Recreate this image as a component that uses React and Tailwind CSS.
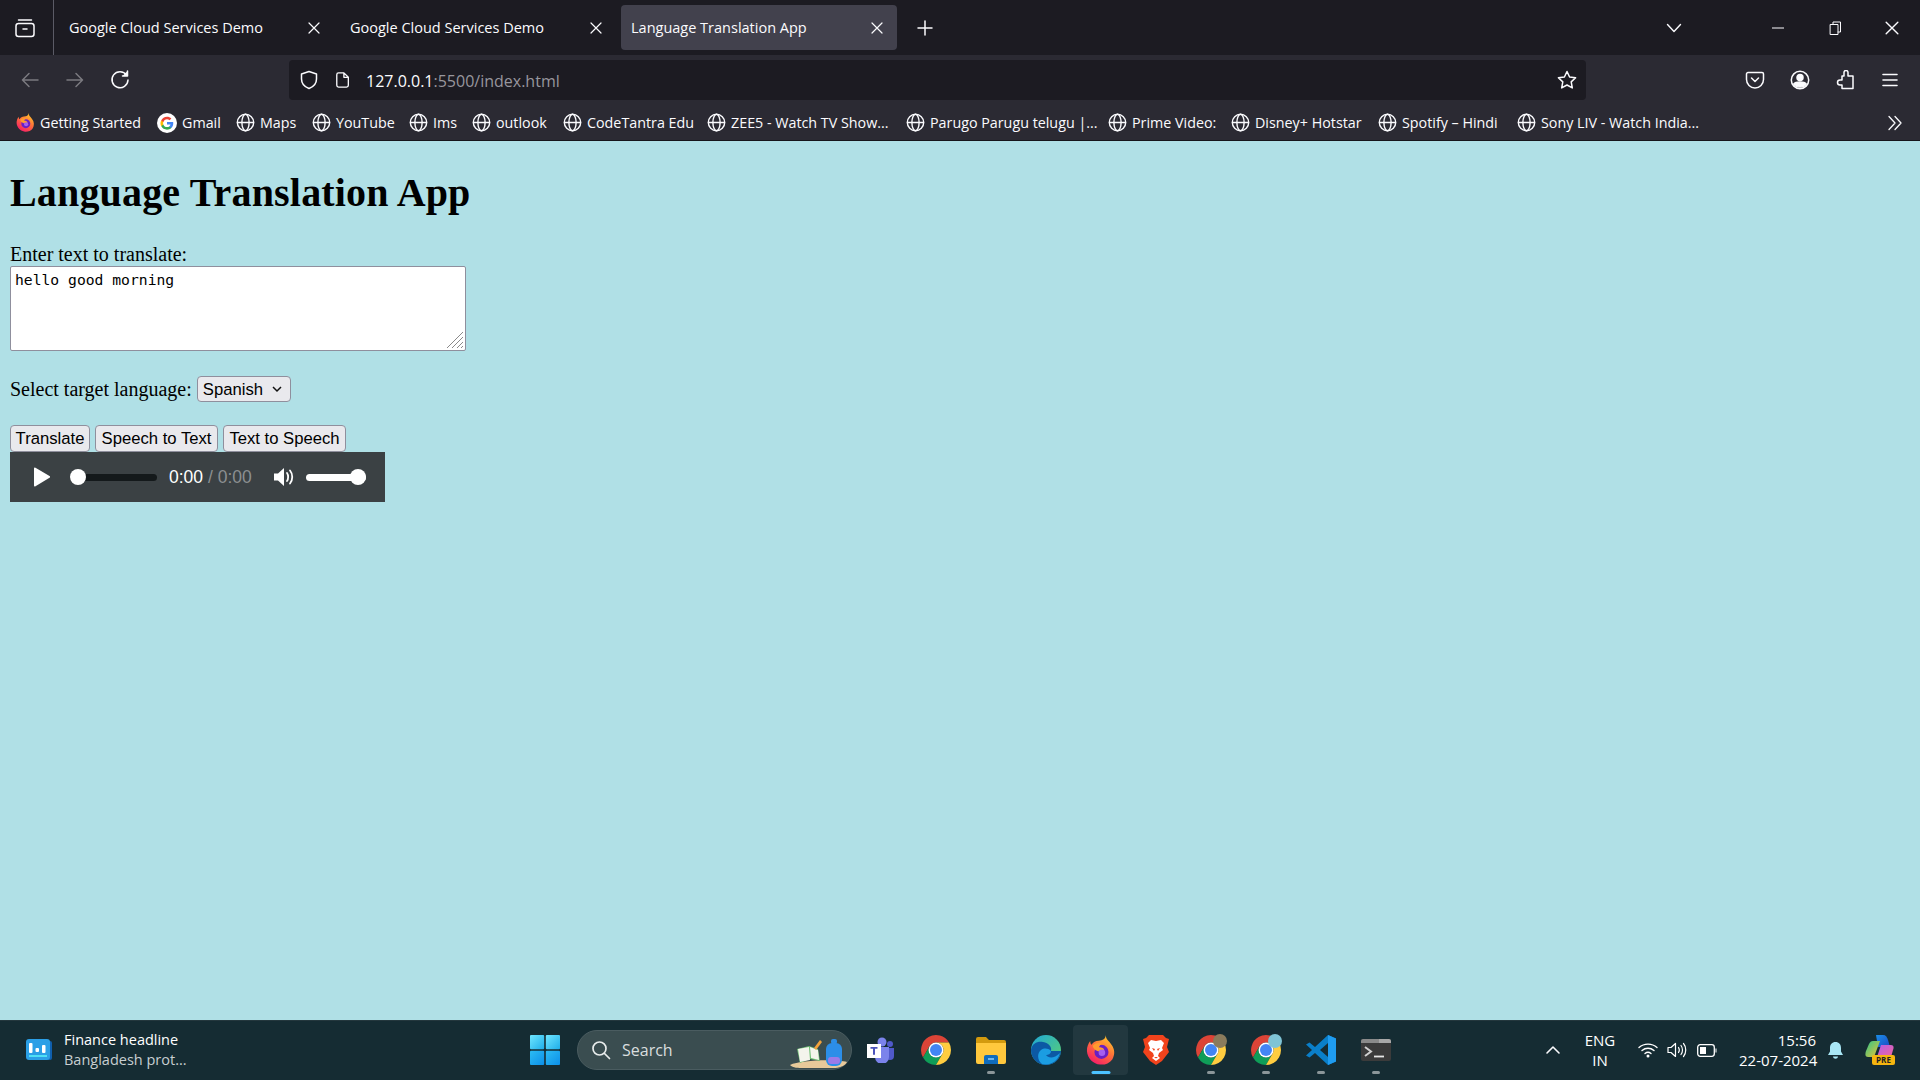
import React from "react";

const uiFont = "font-['Open_Sans','Noto_Sans',sans-serif]";

// Small stroke icon wrapper, everything in the browser chrome uses the same look
const Stroke = ({ size = 20, color = "#fbfbfe", width = 1.5, children, view = "0 0 20 20" }) => (
  <svg width={size} height={size} viewBox={view} fill="none" stroke={color} strokeWidth={width} strokeLinecap="round" strokeLinejoin="round" className="shrink-0">
    {children}
  </svg>
);

const CloseX = ({ size = 12, color = "#fbfbfe" }) => (
  <Stroke size={size} view="0 0 12 12" color={color} width={1.2}>
    <path d="M1 1l10 10M11 1L1 11" />
  </Stroke>
);

const Globe = () => (
  <Stroke size={19} view="0 0 19 19" color="#fbfbfe" width={1.4}>
    <circle cx="9.5" cy="9.5" r="8.2" />
    <ellipse cx="9.5" cy="9.5" rx="3.6" ry="8.2" />
    <path d="M1.5 9.5h16" />
  </Stroke>
);

const Firefox = ({ size = 19, id = "ffBody" }) => (
  <svg width={size} height={size} viewBox="0 0 32 32" className="shrink-0">
    <defs>
      <linearGradient id={id} x1="0.8" y1="0" x2="0.2" y2="1">
        <stop offset="0" stopColor="#ffd02a" />
        <stop offset="0.45" stopColor="#ff7139" />
        <stop offset="1" stopColor="#f5156c" />
      </linearGradient>
    </defs>
    <path d="M21 0c0 4 3 6 6 10 4 5 4 11 1 16-3 4-8 6-13 5.500C8 31 1.500 25 1 17 .8 13 2.500 9 4.500 6.500c0 2 .6 3.500 1.500 4 1.500-3 4.500-4.500 7.500-4.500C18 6 21 4 21 0z" fill={`url(#${id})`} />
    <circle cx="16.500" cy="18" r="7.500" fill="#6a1fc4" />
    <path d="M7 11.500c3-3.500 9-4.500 13-1.500-4-1-6 1-6 3 3 0 5.500 1 5.500 3.500-3 2.500-10.500 1.500-12.500-5z" fill="#ff9a2e" />
    <circle cx="17" cy="19" r="3.500" fill="#a45ff0" />
  </svg>
);

const GoogleG = () => (
  <svg width={20} height={20} viewBox="0 0 48 48" className="shrink-0">
    <circle cx="24" cy="24" r="24" fill="#fff" />
    <path d="M39 24.500c0-1.100-.1-2.200-.3-3.200H24v6h8.500c-.4 2-1.500 3.600-3.100 4.700v3.900h5C37.300 33.200 39 29.200 39 24.500z" fill="#4285f4" />
    <path d="M24 40c4.200 0 7.700-1.400 10.400-3.800l-5-3.900c-1.400.9-3.200 1.500-5.400 1.500-4.100 0-7.600-2.800-8.800-6.500H10v4C12.600 36.500 17.900 40 24 40z" fill="#34a853" />
    <path d="M15.200 27.800c-.3-1-.5-2-.5-3s.2-2.100.5-3v-4H10c-1.100 2.100-1.700 4.500-1.700 7s.6 4.900 1.700 7l5.200-4z" fill="#fbbc05" />
    <path d="M24 15.200c2.300 0 4.400.8 6 2.400l4.500-4.500C31.700 10.500 28.200 9 24 9c-6.100 0-11.400 3.500-14 8.800l5.200 4c1.200-3.800 4.700-6.600 8.800-6.600z" fill="#ea4335" />
  </svg>
);

const Chrome = ({ children }) => (
  <span className="relative flex h-[30px] w-[30px] items-center justify-center">
    <svg width={30} height={30} viewBox="4 4 40 40">
      <path d="M24 14H41.320A20 20 0 0 0 6.680 34L15.340 19A10 10 0 0 1 24 14Z" fill="#db4437" />
      <path d="M15.340 19L6.680 34A20 20 0 0 0 24 44L32.660 29A10 10 0 0 1 15.340 19Z" fill="#0f9d58" />
      <path d="M24 44A20 20 0 0 0 41.320 14H24A10 10 0 0 1 32.660 29Z" fill="#ffcd40" />
      <circle cx="24" cy="24" r="10" fill="#fff" />
      <circle cx="24" cy="24" r="8" fill="#4285f4" />
    </svg>
    {children}
  </span>
);

const Teams = () => (
  <svg width={28} height={26} viewBox="0 0 28 26">
    <circle cx="15" cy="5" r="4.500" fill="#7b83eb" />
    <circle cx="23" cy="7" r="3" fill="#5059c9" />
    <path d="M19 11h8v8a4 4 0 0 1-8 0z" fill="#5059c9" />
    <path d="M8 10h14v10a7 7 0 0 1-14 0z" fill="#7b83eb" />
    <rect x="0" y="7" width="14" height="14" fill="#fff" />
    <path d="M3.500 10h7v1.800H8v6H6v-6H3.500z" fill="#4b53bc" />
  </svg>
);

const Folder = () => (
  <svg width={30} height={28} viewBox="0 0 30 28">
    <path d="M0 3a2 2 0 0 1 2-2h8l3 3h15a2 2 0 0 1 2 2v3H0z" fill="#d39a0e" />
    <path d="M0 7h30v19a2 2 0 0 1-2 2H2a2 2 0 0 1-2-2z" fill="#ffc83d" />
    <path d="M8 21a2 2 0 0 1 2-2h10a2 2 0 0 1 2 2v7H8z" fill="#0f6cbd" />
    <path d="M12 23h6" stroke="#8fd0ff" strokeWidth="1.500" />
  </svg>
);

const Edge = () => (
  <svg width={30} height={30} viewBox="0 0 30 30">
    <defs>
      <linearGradient id="edgeTop" x1="0" y1="0" x2="1" y2="1">
        <stop offset="0" stopColor="#1ea7d8" />
        <stop offset="1" stopColor="#5fd36a" />
      </linearGradient>
    </defs>
    <circle cx="15" cy="15" r="15" fill="url(#edgeTop)" />
    <path d="M0 15C1 8 7 6 12 7c6 1 9 5 8 9h10c0 8-7 14-15 14C6 30 0 23 0 15z" fill="#0c59a4" />
    <path d="M11 29C6 25 6 18 10 15c3-2 7-2 10 1 0 3-3 4-5 4 2 3 8 4 14-2-2 8-9 13-18 11z" fill="#1b9de2" />
  </svg>
);

const Brave = () => (
  <svg width={26} height={30} viewBox="0 0 26 30">
    <path d="M6 0h14l3 3 3 1-2 8 2 5-7 9-6 4-6-4-7-9 2-5L0 4l3-1z" fill="#f1431c" />
    <path d="M13 6l5-1 3 3-2 5 1 2-4 3-1 3 2 2-4 3-4-3 2-2-1-3-4-3 1-2-2-5 3-3z" fill="#fff" />
    <path d="M9 13l3 1-1 2zM17 13l-3 1 1 2zM11 22h4l-2 1.500z" fill="#f1431c" />
  </svg>
);

const VsCode = () => (
  <svg width={30} height={30} viewBox="0 0 30 30">
    <path d="M22 0l8 3.500v23L22 30 9 18l-5.500 4.500L0 20.500l6-5.500-6-5.500L3.500 7.500 9 12z" fill="#0a7fc9" />
    <path d="M22 0l8 3.500v23L22 30z" fill="#1f9cf0" />
    <path d="M22 8l-8 7 8 7z" fill="#152c33" />
  </svg>
);

const Terminal = () => (
  <svg width={30} height={23} viewBox="0 0 30 23">
    <rect width="30" height="22" y="0" rx="2" fill="#3b3b3b" />
    <path d="M0 2a2 2 0 0 1 2-2h16v4H0z" fill="#8a8a8a" />
    <path d="M18 0h10a2 2 0 0 1 2 2v2H18z" fill="#a8a8a8" />
    <path d="M4 8l6 4.500L4 17" fill="none" stroke="#d0d0d0" strokeWidth="2" />
    <path d="M13 17.500h10" stroke="#e6e6e6" strokeWidth="1.800" />
  </svg>
);

const Copilot = () => (
  <svg width={30} height={30} viewBox="0 0 30 30">
    <defs>
      <linearGradient id="copA" x1="0" y1="0" x2="1" y2="1">
        <stop offset="0" stopColor="#1a8ee8" />
        <stop offset="1" stopColor="#1c49c4" />
      </linearGradient>
      <linearGradient id="copB" x1="0" y1="0" x2="1" y2="1">
        <stop offset="0" stopColor="#2bc58a" />
        <stop offset="1" stopColor="#f1c232" />
      </linearGradient>
      <linearGradient id="copC" x1="0" y1="0" x2="1" y2="1">
        <stop offset="0" stopColor="#b45fe6" />
        <stop offset="1" stopColor="#f0649e" />
      </linearGradient>
    </defs>
    <path d="M11 0h7c3 0 4 2 5 5l2 7H13z" fill="url(#copA)" />
    <path d="M8 6h7L9 22H3C0 22 0 19 1 16l3-7c1-2 2-3 4-3z" fill="url(#copB)" />
    <path d="M16 10h10c3 0 3 3 2 5l-2 7H12z" fill="url(#copC)" />
    <rect x="7" y="20" width="23" height="10" rx="2" fill="#f5b50f" />
    <text x="18.500" y="28" textAnchor="middle" fontSize="8" fontWeight="700" fill="#222" fontFamily="'Open Sans',sans-serif">PRE</text>
  </svg>
);

const Widget = () => (
  <svg width={26} height={22} viewBox="0 0 26 22">
    <rect x="21" y="2" width="5" height="19" rx="2" fill="#0f5fae" />
    <rect width="24" height="21" rx="3" fill="#2b9fe6" />
    <rect x="3" y="4" width="3.500" height="10" rx="1" fill="#fff" />
    <rect x="9.500" y="9" width="3.500" height="4" rx="1" fill="#fff" />
    <rect x="16" y="6" width="3.500" height="8" rx="1" fill="#fff" />
    <rect x="3" y="16" width="18" height="2" fill="#4fe0f5" />
  </svg>
);

const WinLogo = () => (
  <svg width={30} height={30} viewBox="0 0 30 30" className="shrink-0">
    <defs>
      <linearGradient id="winA" x1="0" y1="0" x2="1" y2="1">
        <stop offset="0" stopColor="#6fe6ff" />
        <stop offset="1" stopColor="#1faee9" />
      </linearGradient>
      <linearGradient id="winB" x1="0" y1="0" x2="1" y2="1">
        <stop offset="0" stopColor="#2cbcf3" />
        <stop offset="1" stopColor="#0c8fe8" />
      </linearGradient>
    </defs>
    <rect width="14.200" height="14.200" rx="1" fill="url(#winA)" />
    <rect x="15.800" width="14.200" height="14.200" rx="1" fill="url(#winA)" />
    <rect y="15.800" width="14.200" height="14.200" rx="1" fill="url(#winB)" />
    <rect x="15.800" y="15.800" width="14.200" height="14.200" rx="1" fill="url(#winB)" />
  </svg>
);

const SearchArt = () => (
  <svg width={58} height={34} viewBox="0 0 58 32" className="shrink-0">
    <path d="M0 28c10-5 46-6 57-3-2 4-8 6-14 6H14C8 31 3 31 0 28z" fill="#e7c99a" />
    <path d="M7 12l12-3 9 3 2 12-10-2-10 4z" fill="#6fbf73" />
    <path d="M8 12l11-2 1 13-10 2zM20 10l8 3 1 10-8-2z" fill="#f4f4ec" />
    <path d="M24 11l6-8 2 2-6 8z" fill="#f3a23a" />
    <rect x="36" y="6" width="16" height="23" rx="6" fill="#2c8ee8" />
    <rect x="41" y="2" width="6" height="5" rx="2" fill="#2c8ee8" />
    <rect x="38" y="20" width="12" height="7" rx="3" fill="#9a7be8" />
  </svg>
);

const tabs = [
  { title: "Google Cloud Services Demo", wrap: "w-[281px] pl-[15px] pr-[15px]" },
  { title: "Google Cloud Services Demo", wrap: "w-[286px] pl-[15px] pr-[19px]" },
];

const bookmarks = [
  { label: "Getting Started", icon: <Firefox id="ffSmall" />, cls: "w-[141px]" },
  { label: "Gmail", icon: <GoogleG />, cls: "w-[79px]" },
  { label: "Maps", icon: <Globe />, cls: "w-[76px]" },
  { label: "YouTube", icon: <Globe />, cls: "w-[97px]" },
  { label: "Ims", icon: <Globe />, cls: "w-[63px]" },
  { label: "outlook", icon: <Globe />, cls: "w-[91px]" },
  { label: "CodeTantra Edu", icon: <Globe />, cls: "w-[144px]" },
  { label: "ZEE5 - Watch TV Show...", icon: <Globe />, cls: "w-[199px]" },
  { label: "Parugo Parugu telugu |...", icon: <Globe />, cls: "w-[202px]" },
  { label: "Prime Video:", icon: <Globe />, cls: "w-[123px]" },
  { label: "Disney+ Hotstar", icon: <Globe />, cls: "w-[147px]" },
  { label: "Spotify – Hindi", icon: <Globe />, cls: "w-[139px]" },
  { label: "Sony LIV - Watch India...", icon: <Globe />, cls: "w-[200px]" },
];

const TabBar = () => (
  <div className="flex h-[55px] items-center bg-[#1c1b22] text-[#fbfbfe]">
    <div className="flex h-full w-[54px] items-center border-r border-[#5b5b66] pl-[15px]">
      <Stroke size={20}>
        <rect x="1" y="5.500" width="18" height="13" rx="2.500" />
        <path d="M3.500 2h13M8 11h4" />
      </Stroke>
    </div>
    {tabs.map((tab, i) => (
      <div key={i} className={`flex h-[45px] items-center justify-between ${tab.wrap}`}>
        <span className="text-[14.500px] whitespace-nowrap">{tab.title}</span>
        <CloseX />
      </div>
    ))}
    <div className="flex h-[45px] w-[276px] items-center justify-between rounded-[4px] bg-[#42414d] pr-[14px] pl-[10px]">
      <span className="text-[14.500px] whitespace-nowrap">Language Translation App</span>
      <CloseX />
    </div>
    <div className="ml-[20px]">
      <Stroke size={16} view="0 0 16 16" width={1.5}>
        <path d="M8 1v14M1 8h14" />
      </Stroke>
    </div>
    <div className="ml-auto flex items-center">
      <Stroke size={16} view="0 0 16 16" width={1.4}>
        <path d="M1.500 4.500L8 11.500l6.500-7" />
      </Stroke>
      <div className="ml-[88px] flex w-[16px] justify-center">
        <Stroke size={12} view="0 0 12 12" width={1}>
          <path d="M0 6h12" />
        </Stroke>
      </div>
      <div className="ml-[42px]">
        <Stroke size={14} view="0 0 14 14" width={1}>
          <rect x="2.500" y="3.500" width="7.500" height="10" />
          <path d="M5 3.500V1h7.500v10H10" />
        </Stroke>
      </div>
      <div className="mr-[21px] ml-[43px]">
        <CloseX size={14} />
      </div>
    </div>
  </div>
);

const NavBar = () => (
  <div className="flex h-[50px] items-center bg-[#2b2a33] text-[#fbfbfe]">
    <div className="flex w-[289px] items-center gap-[25px] pl-[20px]">
      <Stroke size={20} color="#7b7a80">
        <path d="M18 10H2.500M9 3.500L2.500 10 9 16.500" />
      </Stroke>
      <Stroke size={20} color="#7b7a80">
        <path d="M2 10h15.500M11 3.500l6.500 6.500-6.500 6.500" />
      </Stroke>
      <Stroke size={20}>
        <path d="M16.500 5A8 8 0 1 0 18 10" />
        <path d="M17.500 1v5h-5" fill="#fbfbfe" />
      </Stroke>
    </div>
    <div className="flex h-[40px] w-[1297px] items-center rounded-[4px] bg-[#1c1b22] pr-[9px] pl-[10px]">
      <Stroke size={20}>
        <path d="M10 1.500l7.500 2.500v5c0 5-3.500 8-7.500 9.500C6 17 2.500 14 2.500 9V4z" />
      </Stroke>
      <div className="ml-[16px]">
        <Stroke size={16} view="0 0 16 18" width={1.5}>
          <path d="M3 1h6l5 5v9a2 2 0 0 1-2 2H3a2 2 0 0 1-2-2V3a2 2 0 0 1 2-2zM9 1v5h5" />
        </Stroke>
      </div>
      <span className="ml-[15px] pt-[2px] text-[16px] text-[#fbfbfe]">
        127.0.0.1<span className="text-[#97969d]">:5500/index.html</span>
      </span>
      <div className="ml-auto">
        <Stroke size={20}>
          <path d="M10 1.500l2.600 5.500 6 .8-4.400 4.100 1.100 6L10 15l-5.300 2.900 1.100-6L1.400 7.800l6-.8z" />
        </Stroke>
      </div>
    </div>
    <div className="ml-[159px] flex items-center gap-[25px]">
      <Stroke size={20}>
        <path d="M3 2.500h14a1.500 1.500 0 0 1 1.500 1.500v5.500a8.500 8.500 0 0 1-17 0V4A1.500 1.500 0 0 1 3 2.500z" />
        <path d="M6.500 8l3.500 3.500L13.500 8" />
      </Stroke>
      <Stroke size={20}>
        <circle cx="10" cy="10" r="8.700" />
        <circle cx="10" cy="7.500" r="3" fill="#fbfbfe" />
        <path d="M3.800 14c2-2.800 10.400-2.800 12.400 0-2 4-10.400 4-12.400 0z" fill="#fbfbfe" />
      </Stroke>
      <Stroke size={20}>
        <path d="M9 2.500a2 2 0 0 1 4 0V6h5v12.500H7V15H5a2.500 2.500 0 0 1 0-5h2V6h2z" />
      </Stroke>
      <Stroke size={20} width={1.6}>
        <path d="M3 4.500h14M3 10h14M3 15.500h14" />
      </Stroke>
    </div>
  </div>
);

const BookmarkBar = () => (
  <div className="flex h-[36px] items-center border-b border-[#16151b] bg-[#2b2a33] pl-[16px] text-[#fbfbfe]">
    {bookmarks.map((b) => (
      <div key={b.label} className={`flex items-center gap-[5px] text-[14.300px] whitespace-nowrap ${b.cls}`}>
        {b.icon}
        <span>{b.label}</span>
      </div>
    ))}
    <div className="mr-[17px] ml-auto">
      <Stroke size={16} view="0 0 16 16" width={1.3}>
        <path d="M2 1.500L8 8l-6 6.500M8 1.500L14 8l-6 6.500" />
      </Stroke>
    </div>
  </div>
);

const AudioPlayer = () => (
  <div className={`flex h-[50px] w-[375px] items-center bg-[#3b4144] text-[#fff] ${uiFont}`}>
    <svg width={18} height={20} viewBox="0 0 18 20" className="ml-[23px] shrink-0">
      <path d="M1 1.500a1 1 0 0 1 1.500-.8l14 8.300a1 1 0 0 1 0 1.800l-14 8.500A1 1 0 0 1 1 18.500z" fill="#fff" />
    </svg>
    <div className="relative ml-[19px] h-[7px] w-[87px] rounded-full bg-[#14191b]">
      <span className="absolute top-1/2 left-0 h-[16px] w-[16px] -translate-y-1/2 rounded-full bg-white" />
    </div>
    <span className="ml-[12px] font-['Liberation_Sans',sans-serif] text-[17.500px] whitespace-nowrap">
      0:00 <span className="text-[#8b8f91]">/ 0:00</span>
    </span>
    <svg width={22} height={20} viewBox="0 0 22 20" className="ml-[21px] shrink-0">
      <path d="M1 6.500h4L11 1v18l-6-5.500H1z" fill="#fff" />
      <path d="M14 6c1.500 2 1.500 6 0 8M17 3.500c3 3.500 3 9.500 0 13" fill="none" stroke="#fff" strokeWidth="1.800" strokeLinecap="round" />
    </svg>
    <div className="relative ml-[11px] h-[7px] w-[60px] rounded-full bg-white">
      <span className="absolute top-1/2 right-0 h-[16px] w-[16px] -translate-y-1/2 rounded-full bg-white" />
    </div>
  </div>
);

const Page = () => (
  <main className="min-h-0 flex-1 bg-[#b0e0e6] pl-[10px] font-['Liberation_Serif',serif] text-[20px] text-black">
    <h1 className="mt-[29px] text-[40px] leading-[46px] font-bold tracking-[0.17px]">Language Translation App</h1>
    <label className="mt-[27px] block leading-[23px]">Enter text to translate:</label>
    <div className="relative h-[85px] w-[456px]">
      <textarea
        defaultValue="hello good morning"
        className="block h-full w-full resize-none rounded-[2px] border border-[#8f8f9d] bg-white px-[4px] py-[3px] font-['DejaVu_Sans_Mono',monospace] text-[14.700px] leading-[20px]"
      />
      <svg width={18} height={18} viewBox="0 0 18 18" className="absolute right-[2px] bottom-[2px]">
        <path d="M1 17L17 1M6 17L17 6M11 17l6-6M15 17l2-2" stroke="#8a8a8a" strokeWidth="1" />
      </svg>
    </div>
    <div className="mt-[25px] flex h-[26px] items-center">
      <span>Select target language:</span>
      <div className="relative ml-[5px] h-[26px] w-[94px]">
        <select
          defaultValue="Spanish"
          className="block h-full w-full appearance-none rounded-[4px] border border-[#8f8f9d] bg-[#e9e9ed] pl-[5px] font-['Liberation_Sans',sans-serif] text-[16.670px]"
        >
          <option>Spanish</option>
          <option>French</option>
          <option>German</option>
        </select>
        <svg width={10} height={7} viewBox="0 0 10 7" className="pointer-events-none absolute top-[10px] right-[9px]">
          <path d="M1 1l4 4 4-4" fill="none" stroke="#111" strokeWidth="1.500" />
        </svg>
      </div>
    </div>
    <div className="mt-[23px] flex h-[27px] gap-[5px] font-['Liberation_Sans',sans-serif] text-[16.670px]">
      <button className="w-[80px] rounded-[4px] border border-[#8f8f9d] bg-[#e9e9ed]">Translate</button>
      <button className="w-[123px] rounded-[4px] border border-[#8f8f9d] bg-[#e9e9ed]">Speech to Text</button>
      <button className="w-[123px] rounded-[4px] border border-[#8f8f9d] bg-[#e9e9ed]">Text to Speech</button>
    </div>
    <AudioPlayer />
  </main>
);

const Pinned = ({ children, dot, active }) => (
  <div className={`relative flex h-[50px] w-[55px] items-center justify-center rounded-[4px] ${active ? "bg-[#22383f]" : ""}`}>
    {children}
    {dot && <span className="absolute bottom-[1px] left-1/2 h-[3px] w-[8px] -translate-x-1/2 rounded-full bg-[#8b9699]" />}
    {active && <span className="absolute bottom-[1px] left-1/2 h-[3px] w-[19px] -translate-x-1/2 rounded-full bg-[#4cc2ff]" />}
  </div>
);

const Taskbar = () => (
  <div className={`flex h-[60px] items-center border-t border-[#24373d] bg-[#152c33] pb-[1px] text-white ${uiFont}`}>
    <div className="flex w-[530px] items-center pl-[26px]">
      <Widget />
      <div className="ml-[12px] text-[14.500px] leading-[20px]">
        <p>Finance headline</p>
        <p className="text-[#c8cfd1]">Bangladesh prot...</p>
      </div>
    </div>
    <WinLogo />
    <div className="ml-[17px] flex h-[40px] w-[275px] items-center rounded-full border border-[#4a5c60] bg-[#3a4d50] pr-[3px] pl-[13px]">
      <Stroke size={20} color="#e8ecec" width={1.7}>
        <circle cx="8.500" cy="8.500" r="6.500" />
        <path d="M13.500 13.500L18.500 18.500" />
      </Stroke>
      <span className="ml-[11px] text-[16px] text-[#d9dedf]">Search</span>
      <div className="mt-[6px] ml-auto">
        <SearchArt />
      </div>
    </div>
    <div className="ml-[1px] flex items-center">
      <Pinned><Teams /></Pinned>
      <Pinned><Chrome /></Pinned>
      <Pinned dot><Folder /></Pinned>
      <Pinned><Edge /></Pinned>
      <Pinned active><Firefox size={30} id="ffLarge" /></Pinned>
      <Pinned><Brave /></Pinned>
      <Pinned dot>
        <Chrome>
          <span className="absolute -top-[1px] -right-[1px] h-[14px] w-[14px] rounded-full bg-[#8a7b5c]" />
        </Chrome>
      </Pinned>
      <Pinned dot>
        <Chrome>
          <span className="absolute -top-[1px] -right-[1px] h-[14px] w-[14px] rounded-full bg-[#7fc4d6]" />
        </Chrome>
      </Pinned>
      <Pinned dot><VsCode /></Pinned>
      <Pinned dot><Terminal /></Pinned>
    </div>
    <div className="ml-auto flex items-center">
      <Stroke size={16} view="0 0 16 16" width={1.6}>
        <path d="M2 11l6-6 6 6" />
      </Stroke>
      <div className="ml-[19px] w-[40px] text-center text-[15px] leading-[20px]">
        <p>ENG</p>
        <p>IN</p>
      </div>
      <div className="ml-[18px]">
        <svg width={20} height={16} viewBox="0 0 20 16">
          <path d="M1 5.500c5-4.500 13-4.500 18 0M4 8.500c3.500-3 8.500-3 12 0M7 11.500c1.800-1.500 4.200-1.500 6 0" fill="none" stroke="#fff" strokeWidth="1.400" strokeLinecap="round" />
          <circle cx="10" cy="14" r="1.500" fill="#fff" />
        </svg>
      </div>
      <div className="ml-[9px]">
        <svg width={20} height={16} viewBox="0 0 20 16">
          <path d="M1 5.500h3L8.500 1.500v13L4 10.500H1z" fill="none" stroke="#fff" strokeWidth="1.200" strokeLinejoin="round" />
          <path d="M11.500 5.500c1 1.500 1 3.500 0 5M14 3.500c2 2.500 2 6.500 0 9M16.500 1.500c3 3.500 3 9.500 0 13" fill="none" stroke="#fff" strokeWidth="1.200" strokeLinecap="round" />
        </svg>
      </div>
      <div className="ml-[10px]">
        <svg width={20} height={13} viewBox="0 0 20 13">
          <rect x="0.700" y="0.700" width="16.600" height="11.600" rx="2.500" fill="none" stroke="#fff" strokeWidth="1.300" />
          <rect x="3" y="3" width="6" height="7" fill="#fff" />
          <path d="M18.500 4.500h1v4h-1z" fill="#fff" />
        </svg>
      </div>
      <div className="ml-[22px] w-[77px] text-right text-[15px] leading-[20px] whitespace-nowrap">
        <p>15:56</p>
        <p>22-07-2024</p>
      </div>
      <div className="ml-[11px]">
        <svg width={17} height={19} viewBox="0 0 17 19">
          <path d="M8.500 1C5 1 3 3.500 3 7v3.500L1 14h15l-2-3.500V7c0-3.500-2-6-5.500-6z" fill="#a8e6f5" />
          <path d="M6 15.500h5c-.3 3-4.700 3-5 0z" fill="#a8e6f5" />
        </svg>
      </div>
      <div className="mr-[25px] ml-[21px]">
        <Copilot />
      </div>
    </div>
  </div>
);

export default function App() {
  return (
    <div className={`flex h-screen flex-col overflow-hidden ${uiFont}`}>
      <TabBar />
      <NavBar />
      <BookmarkBar />
      <Page />
      <Taskbar />
    </div>
  );
}
